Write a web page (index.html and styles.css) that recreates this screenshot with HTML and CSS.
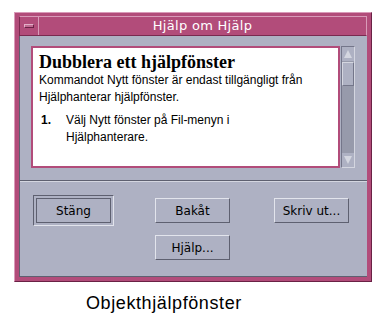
FILE: index.html
```html
<!DOCTYPE html>
<html lang="sv">
<head>
    <meta charset="UTF-8">
    <title>Hjälp om Hjälp</title>
    <link rel="stylesheet" href="styles.css">
</head>
<body>

<div class="window">
    <div class="titlebar">
        <div class="menu-box"><span class="menu-bar"></span></div>
        <div class="title">Hjälp om Hjälp</div>
    </div>

    <div class="panel">
        <div class="viewer">
            <div class="page">
                <h1>Dubblera ett hjälpfönster</h1>
                <p>Kommandot Nytt fönster är endast tillgängligt från Hjälphanterar hjälpfönster.</p>
                <ol>
                    <li><span class="num">1.</span><span>Välj Nytt fönster på Fil-menyn i Hjälphanterare.</span></li>
                </ol>
            </div>
            <div class="scrollbar">
                <div class="arrow up"></div>
                <div class="thumb"></div>
                <div class="track"></div>
                <div class="arrow down"></div>
            </div>
        </div>

        <div class="buttons">
            <div class="default-ring"><button>Stäng</button></div>
            <button>Bakåt</button>
            <button>Skriv ut...</button>
            <span></span>
            <button>Hjälp...</button>
        </div>
    </div>
</div>

<p class="caption">Objekthjälpfönster</p>

</body>
</html>
```

FILE: styles.css
```css
* {
    margin: 0;
    padding: 0;
    box-sizing: border-box;
}

body {
    background-color: #fff;
    font-family: "DejaVu Sans", sans-serif;
    width: 384px;
    height: 320px;
    overflow: hidden;
}

.window {
    margin: 12px 0 0 14px;
    width: 358px;
    height: 270px;
    background-color: #b24c7a;
    border: 1px solid;
    border-color: #d99bb9 #6a2145 #6a2145 #d99bb9;
    padding: 3px 4px 4px 4px;
    display: flex;
    flex-direction: column;
}

.titlebar {
    height: 20px;
    display: flex;
    border: 1px solid;
    border-color: #d99bb9 #d99bb9 #7a2a50 #7a2a50;
}

.menu-box {
    width: 19px;
    border-right: 1px solid #d99bb9;
    display: flex;
    align-items: center;
    justify-content: center;
}

.menu-bar {
    width: 10px;
    height: 4px;
    background-color: #c06a92;
    border: 1px solid;
    border-color: #e3b0c8 #6a2145 #6a2145 #e3b0c8;
}

.title {
    flex: 1;
    color: #fff;
    font-size: 13px;
    text-align: center;
    line-height: 18px;
    letter-spacing: 0.3px;
}

.panel {
    flex: 1;
    background-color: #aeb1c3;
    border-left: 1px solid #5e6070;
    border-bottom: 1px solid #5e6070;
    padding: 10px 12px 0 11px;
}

.viewer {
    display: flex;
    height: 122px;
}

.page {
    flex: 1;
    background-color: #fff;
    border: 2px solid #b24c7a;
    padding: 4px 6px 0 6px;
    color: #000;
}

.page h1 {
    font-family: "Liberation Serif", serif;
    font-size: 18px;
    font-weight: bold;
    line-height: 20px;
}

.page p {
    font-family: "Liberation Sans", sans-serif;
    font-size: 12px;
    line-height: 17px;
}

.page ol {
    list-style: none;
    margin-top: 6px;
    font-family: "Liberation Sans", sans-serif;
    font-size: 12px;
    line-height: 17px;
}

.page li {
    display: flex;
    padding-right: 40px;
}

.page .num {
    font-weight: bold;
    width: 27px;
    padding-left: 2px;
    flex-shrink: 0;
}

.scrollbar {
    width: 14px;
    margin-left: 1px;
    display: flex;
    flex-direction: column;
    background-color: #979aab;
    border: 1px solid;
    border-color: #74768a #d4d6e0 #d4d6e0 #74768a;
}

.arrow {
    height: 14px;
    position: relative;
    background-color: #aeb1c3;
}

.arrow::after {
    content: "";
    position: absolute;
    left: 2px;
    border-left: 4px solid transparent;
    border-right: 4px solid transparent;
}

.arrow.up::after {
    top: 3px;
    border-bottom: 8px solid #d4d6e0;
}

.arrow.down::after {
    top: 3px;
    border-top: 8px solid #d4d6e0;
}

.thumb {
    height: 24px;
    margin-top: 1px;
    background-color: #aeb1c3;
    border: 1px solid;
    border-color: #d4d6e0 #74768a #74768a #d4d6e0;
}

.track {
    flex: 1;
}

.buttons {
    margin: 12px -12px 0 -11px;
    border-top: 1px solid #5e6070;
    box-shadow: inset 0 1px 0 #d4d6e0;
    padding: 17px 0 0 16px;
    display: grid;
    grid-template-columns: 75px 75px 75px;
    column-gap: 44px;
    row-gap: 12px;
}

.buttons button {
    width: 75px;
    height: 25px;
    background-color: #aeb1c3;
    font-family: "DejaVu Sans", sans-serif;
    font-size: 12px;
    color: #000;
    border: 1px solid;
    border-color: #e2e4ec #5e6070 #5e6070 #e2e4ec;
}

.default-ring {
    margin: -3px;
    padding: 2px;
    border: 1px solid;
    border-color: #5e6070 #e2e4ec #e2e4ec #5e6070;
    width: 81px;
}

.default-ring button {
    border-color: #5e6070;
}

.caption {
    margin-top: 11px;
    padding-left: 86px;
    font-family: "Liberation Sans", sans-serif;
    font-size: 18px;
    letter-spacing: 0.6px;
    color: #000;
}
```
